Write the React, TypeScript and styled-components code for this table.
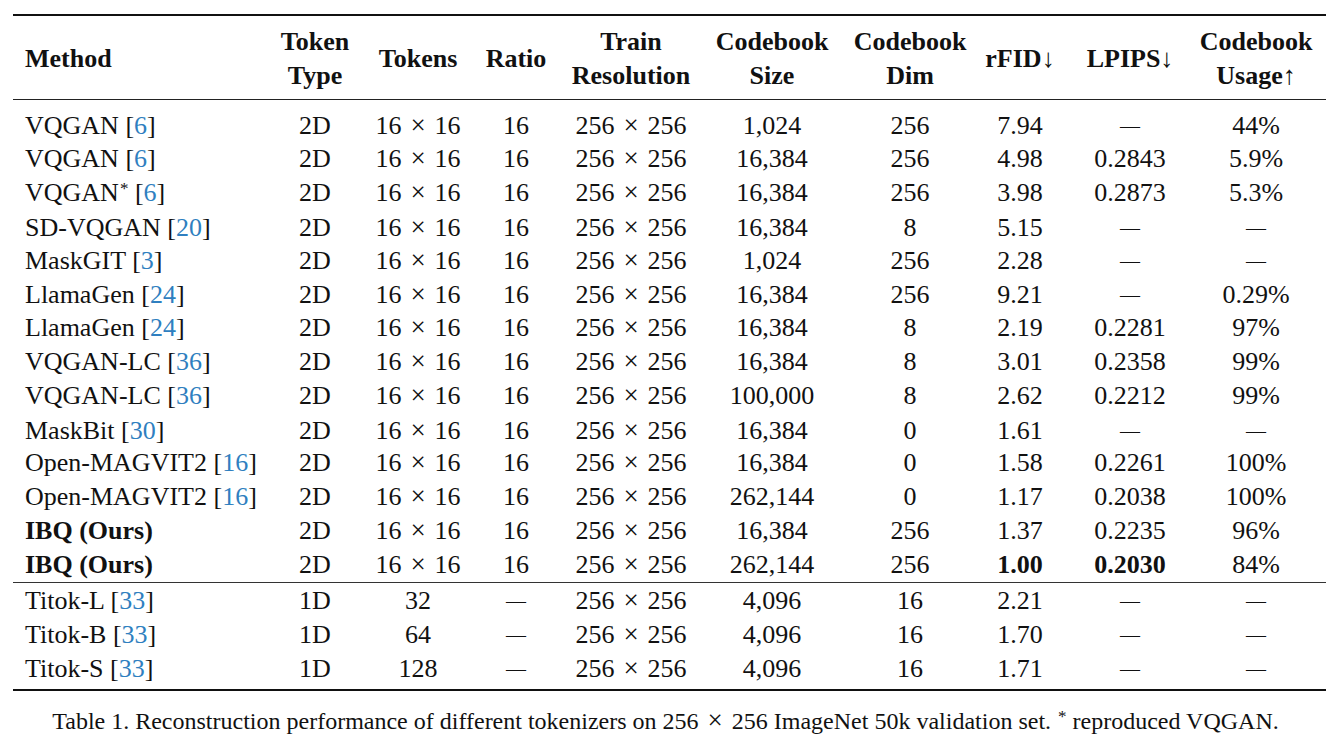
import React from 'react';
import styled, { createGlobalStyle } from 'styled-components';

const GlobalStyle = createGlobalStyle`
  html, body {
    margin: 0;
    padding: 0;
    background: #ffffff;
  }
  body {
    font-family: "Liberation Serif", "Times New Roman", serif;
    color: #111111;
  }
`;

const COLUMNS = '252px 100px 106px 90px 140px 142px 134px 86px 134px 118px';

const Page = styled.div`
  width: 1344px;
  height: 740px;
  overflow: hidden;
  padding: 14px 0 0 13px;
  box-sizing: border-box;
`;

const Table = styled.div`
  width: 1313px;
  border-top: 2.5px solid #111;
  border-bottom: 2.5px solid #111;
`;

const HeaderRow = styled.div`
  display: grid;
  grid-template-columns: ${COLUMNS};
  align-items: center;
  padding: 9px 0 6px;
  border-bottom: 1.4px solid #222;
  font-weight: 700;
  font-size: 26px;
  line-height: 34px;
`;

const Group = styled.div<{ $top?: number; $bottom?: number; $rule?: boolean }>`
  padding-top: ${(p) => p.$top ?? 0}px;
  padding-bottom: ${(p) => p.$bottom ?? 0}px;
  border-bottom: ${(p) => (p.$rule ? '1.2px solid #333' : 'none')};
`;

const Row = styled.div`
  display: grid;
  grid-template-columns: ${COLUMNS};
  align-items: center;
  height: 33.85px;
  font-size: 26px;
  line-height: 33.85px;
`;

const Cell = styled.div<{ $left?: boolean; $bold?: boolean }>`
  text-align: ${(p) => (p.$left ? 'left' : 'center')};
  padding-left: ${(p) => (p.$left ? '12px' : '0')};
  font-weight: ${(p) => (p.$bold ? 700 : 400)};
  white-space: nowrap;
`;

const Cite = styled.span`
  color: #2f7fc0;
`;

const Star = styled.sup`
  font-size: 17px;
  line-height: 0;
  vertical-align: 7px;
  margin-left: 1px;
`;

const Times = styled.span`
  display: inline-block;
  margin: 0 9px;
  font-size: 27px;
`;

const Dash = styled.span`
  font-size: 20px;
`;

const Arrow = styled.span`
  font-family: "Liberation Serif", "DejaVu Serif", serif;
  font-weight: 400;
  font-size: 26px;
`;

const Caption = styled.div`
  width: 1313px;
  margin-top: 15px;
  padding-right: 8px;
  box-sizing: border-box;
  text-align: center;
  font-size: 24px;
  line-height: 28px;
`;

type Method = { name: string; cite?: string; star?: boolean; bold?: boolean };

type Entry = {
  method: Method;
  type: string;
  tokens: string;
  ratio: string;
  res: string;
  size: string;
  dim: string;
  rfid: string;
  lpips: string;
  usage: string;
  boldRfid?: boolean;
  boldLpips?: boolean;
};

const grid2d: Entry[] = [
  { method: { name: 'VQGAN', cite: '6' }, type: '2D', tokens: '16x16', ratio: '16', res: '256x256', size: '1,024', dim: '256', rfid: '7.94', lpips: '-', usage: '44%' },
  { method: { name: 'VQGAN', cite: '6' }, type: '2D', tokens: '16x16', ratio: '16', res: '256x256', size: '16,384', dim: '256', rfid: '4.98', lpips: '0.2843', usage: '5.9%' },
  { method: { name: 'VQGAN', cite: '6', star: true }, type: '2D', tokens: '16x16', ratio: '16', res: '256x256', size: '16,384', dim: '256', rfid: '3.98', lpips: '0.2873', usage: '5.3%' },
  { method: { name: 'SD-VQGAN', cite: '20' }, type: '2D', tokens: '16x16', ratio: '16', res: '256x256', size: '16,384', dim: '8', rfid: '5.15', lpips: '-', usage: '-' },
  { method: { name: 'MaskGIT', cite: '3' }, type: '2D', tokens: '16x16', ratio: '16', res: '256x256', size: '1,024', dim: '256', rfid: '2.28', lpips: '-', usage: '-' },
  { method: { name: 'LlamaGen', cite: '24' }, type: '2D', tokens: '16x16', ratio: '16', res: '256x256', size: '16,384', dim: '256', rfid: '9.21', lpips: '-', usage: '0.29%' },
  { method: { name: 'LlamaGen', cite: '24' }, type: '2D', tokens: '16x16', ratio: '16', res: '256x256', size: '16,384', dim: '8', rfid: '2.19', lpips: '0.2281', usage: '97%' },
  { method: { name: 'VQGAN-LC', cite: '36' }, type: '2D', tokens: '16x16', ratio: '16', res: '256x256', size: '16,384', dim: '8', rfid: '3.01', lpips: '0.2358', usage: '99%' },
  { method: { name: 'VQGAN-LC', cite: '36' }, type: '2D', tokens: '16x16', ratio: '16', res: '256x256', size: '100,000', dim: '8', rfid: '2.62', lpips: '0.2212', usage: '99%' },
  { method: { name: 'MaskBit', cite: '30' }, type: '2D', tokens: '16x16', ratio: '16', res: '256x256', size: '16,384', dim: '0', rfid: '1.61', lpips: '-', usage: '-' },
  { method: { name: 'Open-MAGVIT2', cite: '16' }, type: '2D', tokens: '16x16', ratio: '16', res: '256x256', size: '16,384', dim: '0', rfid: '1.58', lpips: '0.2261', usage: '100%' },
  { method: { name: 'Open-MAGVIT2', cite: '16' }, type: '2D', tokens: '16x16', ratio: '16', res: '256x256', size: '262,144', dim: '0', rfid: '1.17', lpips: '0.2038', usage: '100%' },
  { method: { name: 'IBQ (Ours)', bold: true }, type: '2D', tokens: '16x16', ratio: '16', res: '256x256', size: '16,384', dim: '256', rfid: '1.37', lpips: '0.2235', usage: '96%' },
  { method: { name: 'IBQ (Ours)', bold: true }, type: '2D', tokens: '16x16', ratio: '16', res: '256x256', size: '262,144', dim: '256', rfid: '1.00', lpips: '0.2030', usage: '84%', boldRfid: true, boldLpips: true },
];

const grid1d: Entry[] = [
  { method: { name: 'Titok-L', cite: '33' }, type: '1D', tokens: '32', ratio: '-', res: '256x256', size: '4,096', dim: '16', rfid: '2.21', lpips: '-', usage: '-' },
  { method: { name: 'Titok-B', cite: '33' }, type: '1D', tokens: '64', ratio: '-', res: '256x256', size: '4,096', dim: '16', rfid: '1.70', lpips: '-', usage: '-' },
  { method: { name: 'Titok-S', cite: '33' }, type: '1D', tokens: '128', ratio: '-', res: '256x256', size: '4,096', dim: '16', rfid: '1.71', lpips: '-', usage: '-' },
];

// "-" stands for the missing-value dash, "AxB" for a product like 16 × 16
const Value: React.FC<{ v: string }> = ({ v }) => {
  if (v === '-') return <Dash>—</Dash>;
  if (v.includes('x')) {
    const [a, b] = v.split('x');
    return (
      <>
        {a}
        <Times>×</Times>
        {b}
      </>
    );
  }
  return <>{v}</>;
};

const DataRow: React.FC<{ e: Entry }> = ({ e }) => (
  <Row>
    <Cell $left $bold={e.method.bold}>
      {e.method.name}
      {e.method.star && <Star>*</Star>}
      {e.method.cite && (
        <>
          {' '}[<Cite>{e.method.cite}</Cite>]
        </>
      )}
    </Cell>
    <Cell>{e.type}</Cell>
    <Cell><Value v={e.tokens} /></Cell>
    <Cell><Value v={e.ratio} /></Cell>
    <Cell><Value v={e.res} /></Cell>
    <Cell>{e.size}</Cell>
    <Cell>{e.dim}</Cell>
    <Cell $bold={e.boldRfid}>{e.rfid}</Cell>
    <Cell $bold={e.boldLpips}><Value v={e.lpips} /></Cell>
    <Cell><Value v={e.usage} /></Cell>
  </Row>
);

export default function App() {
  return (
    <>
      <GlobalStyle />
      <Page>
        <Table>
          <HeaderRow>
            <Cell $left $bold>Method</Cell>
            <Cell $bold>Token<br />Type</Cell>
            <Cell $bold>Tokens</Cell>
            <Cell $bold>Ratio</Cell>
            <Cell $bold>Train<br />Resolution</Cell>
            <Cell $bold>Codebook<br />Size</Cell>
            <Cell $bold>Codebook<br />Dim</Cell>
            <Cell $bold>rFID<Arrow>↓</Arrow></Cell>
            <Cell $bold>LPIPS<Arrow>↓</Arrow></Cell>
            <Cell $bold>Codebook<br />Usage<Arrow>↑</Arrow></Cell>
          </HeaderRow>
          <Group $top={8} $rule>
            {grid2d.map((e, i) => (
              <DataRow key={i} e={e} />
            ))}
          </Group>
          <Group $bottom={5}>
            {grid1d.map((e, i) => (
              <DataRow key={i} e={e} />
            ))}
          </Group>
        </Table>
        <Caption>
          Table 1. Reconstruction performance of different tokenizers on 256<Times>×</Times>256 ImageNet 50k validation set.{' '}
          <Star>*</Star> reproduced VQGAN.
        </Caption>
      </Page>
    </>
  );
}
